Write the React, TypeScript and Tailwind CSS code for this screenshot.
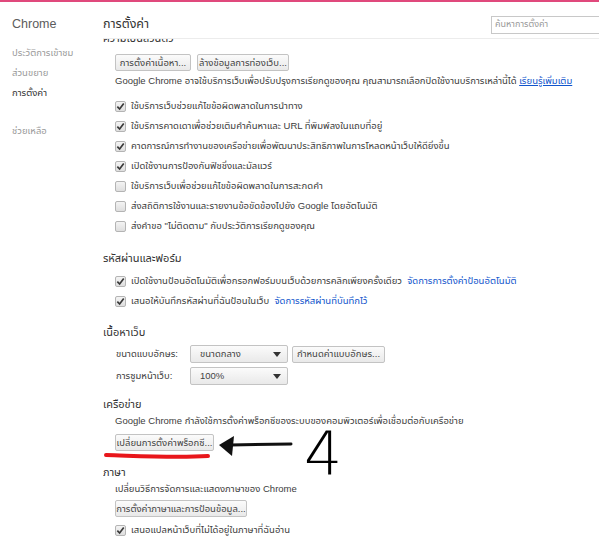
import React from 'react';

const font = "font-['Liberation_Sans','Noto_Sans_Thai_UI',sans-serif]";

const Check: React.FC<{ checked?: boolean }> = ({ checked }) => (
  <span className="flex-shrink-0 w-[11px] h-[11px] rounded-[2px] border border-[#b4b4b4] bg-gradient-to-b from-[#f4f4f4] to-[#dedede] flex items-center justify-center">
    {checked && (
      <svg width="9" height="9" viewBox="0 0 10 10">
        <path d="M1.5 5.2 L4 7.8 L8.6 1.6" fill="none" stroke="#3a3a3a" strokeWidth="1.9" />
      </svg>
    )}
  </span>
);

const Row: React.FC<{ checked?: boolean; children: React.ReactNode }> = ({ checked, children }) => (
  <div className="h-[20px] flex items-center gap-[5px] whitespace-nowrap">
    <Check checked={checked} />
    <span>{children}</span>
  </div>
);

const Btn: React.FC<{ w: string; children: React.ReactNode }> = ({ w, children }) => (
  <button className={`${w} h-[17px] flex-shrink-0 rounded-[2px] border border-[#c3c3c3] bg-gradient-to-b from-[#fbfbfb] to-[#e9e9e9] text-[9.5px] text-[#444] leading-none whitespace-nowrap`}>
    {children}
  </button>
);

const Select: React.FC<{ value: string }> = ({ value }) => (
  <div className="w-[98px] h-[18px] flex-shrink-0 rounded-[2px] border border-[#c3c3c3] bg-gradient-to-b from-[#fbfbfb] to-[#e9e9e9] flex items-center justify-between pl-[9px] pr-[6px] text-[9.5px] text-[#444]">
    <span>{value}</span>
    <svg width="8" height="5" viewBox="0 0 8 5">
      <path d="M0 0 H8 L4 5 Z" fill="#333" />
    </svg>
  </div>
);

const Heading: React.FC<{ className?: string; children: React.ReactNode }> = ({ className = '', children }) => (
  <div className={`h-[20px] flex items-center text-[11px] text-[#333] ${className}`}>{children}</div>
);

export default function App() {
  return (
    <div className={`relative w-[599px] h-[550px] overflow-hidden bg-white border-t-[2px] border-[#e0497c] flex ${font}`}>
      <aside className="w-[103px] flex-shrink-0 pl-[12px]">
        <div className="h-[36px] pt-[9px] flex items-center text-[12.5px] text-[#5c5c5c]">Chrome</div>
        <div className="text-[9.5px] text-[#9a9a9a] flex flex-col">
          <div className="h-[20px] mt-[5px] flex items-center">ประวัติการเข้าชม</div>
          <div className="h-[20px] flex items-center">ส่วนขยาย</div>
          <div className="h-[20px] flex items-center text-[#333]">การตั้งค่า</div>
          <div className="h-[20px] mt-[18px] flex items-center">ช่วยเหลือ</div>
        </div>
      </aside>

      <main className="flex-1 flex flex-col min-w-0">
        <header className="h-[37px] pt-[9px] flex-shrink-0 flex items-center justify-between border-b border-[#ececec] bg-white relative z-10">
          <h1 className="text-[12.5px] text-[#333]">การตั้งค่า</h1>
          <div className="w-[110px] h-[18px] -mr-[2px] border border-[#c8c8c8] flex items-center pl-[3px] text-[9px] text-[#999]">
            ค้นหาการตั้งค่า
          </div>
        </header>

        <div className="flex-1 overflow-hidden text-[9.5px] text-[#3c3c3c]">
          <Heading className="-mt-[11px]">ความเป็นส่วนตัว</Heading>
          <div className="pl-[12px]">
            <div className="mt-[6px] flex gap-[6px]">
              <Btn w="w-[76px]">การตั้งค่าเนื้อหา...</Btn>
              <Btn w="w-[92px]">ล้างข้อมูลการท่องเว็บ...</Btn>
            </div>
            <div className="h-[20px] flex items-center whitespace-nowrap">
              Google Chrome อาจใช้บริการเว็บเพื่อปรับปรุงการเรียกดูของคุณ คุณสามารถเลือกปิดใช้งานบริการเหล่านี้ได้&nbsp;
              <a className="text-[#1155cc] underline">เรียนรู้เพิ่มเติม</a>
            </div>
            <div className="mt-[5px]">
              <Row checked>ใช้บริการเว็บช่วยแก้ไขข้อผิดพลาดในการนำทาง</Row>
              <Row checked>ใช้บริการคาดเดาเพื่อช่วยเติมคำค้นหาและ URL ที่พิมพ์ลงในแถบที่อยู่</Row>
              <Row checked>คาดการณ์การทำงานของเครือข่ายเพื่อพัฒนาประสิทธิภาพในการโหลดหน้าเว็บให้ดียิ่งขึ้น</Row>
              <Row checked>เปิดใช้งานการป้องกันฟิชชิ่งและมัลแวร์</Row>
              <Row>ใช้บริการเว็บเพื่อช่วยแก้ไขข้อผิดพลาดในการสะกดคำ</Row>
              <Row>ส่งสถิติการใช้งานและรายงานข้อขัดข้องไปยัง Google โดยอัตโนมัติ</Row>
              <Row>ส่งคำขอ "ไม่ติดตาม" กับประวัติการเรียกดูของคุณ</Row>
            </div>
          </div>

          <Heading className="mt-[12px]">รหัสผ่านและฟอร์ม</Heading>
          <div className="pl-[12px] mt-[3px]">
            <Row checked>
              เปิดใช้งานป้อนอัตโนมัติเพื่อกรอกฟอร์มบนเว็บด้วยการคลิกเพียงครั้งเดียว&nbsp;&nbsp;
              <a className="text-[#1155cc]">จัดการการตั้งค่าป้อนอัตโนมัติ</a>
            </Row>
            <Row checked>
              เสนอให้บันทึกรหัสผ่านที่ฉันป้อนในเว็บ&nbsp;&nbsp;
              <a className="text-[#1155cc]">จัดการรหัสผ่านที่บันทึกไว้</a>
            </Row>
          </div>

          <Heading className="mt-[11px]">เนื้อหาเว็บ</Heading>
          <div className="pl-[13px] mt-[3px] flex flex-col gap-[4px]">
            <div className="flex items-center">
              <span className="w-[74px] flex-shrink-0">ขนาดแบบอักษร:</span>
              <Select value="ขนาดกลาง" />
              <span className="w-[4px]" />
              <Btn w="w-[93px]">กำหนดค่าแบบอักษร...</Btn>
            </div>
            <div className="flex items-center">
              <span className="w-[74px] flex-shrink-0">การซูมหน้าเว็บ:</span>
              <Select value="100%" />
            </div>
          </div>

          <Heading className="mt-[10px] !h-[18px]">เครือข่าย</Heading>
          <div className="pl-[12px]">
            <div className="h-[16px] flex items-center whitespace-nowrap">
              Google Chrome กำลังใช้การตั้งค่าพร็อกซีของระบบของคอมพิวเตอร์เพื่อเชื่อมต่อกับเครือข่าย
            </div>
            <div className="mt-[5px] flex">
              <Btn w="w-[99px]">เปลี่ยนการตั้งค่าพร็อกซี...</Btn>
            </div>
          </div>

          <Heading className="mt-[12px] !h-[18px]">ภาษา</Heading>
          <div className="pl-[12px]">
            <div className="h-[16px] flex items-center whitespace-nowrap">เปลี่ยนวิธีการจัดการและแสดงภาษาของ Chrome</div>
            <div className="mt-[3px] flex">
              <Btn w="w-[132px]">การตั้งค่าภาษาและการป้อนข้อมูล...</Btn>
            </div>
            <div className="mt-[3px]">
              <Row checked>เสนอแปลหน้าเว็บที่ไม่ได้อยู่ในภาษาที่ฉันอ่าน</Row>
            </div>
          </div>
        </div>
      </main>

      {/* hand-drawn annotation over the page */}
      <svg className="absolute left-0 top-0 pointer-events-none" width="599" height="550" viewBox="0 -2 599 550">
        <path d="M106 451 C140 452 175 454 208 452" fill="none" stroke="#e8161b" strokeWidth="4" strokeLinecap="round" />
        <path d="M219 441 L234 432 L232 452 Z" fill="#111" />
        <path d="M230 441 L291 440" fill="none" stroke="#111" strokeWidth="3" strokeLinecap="round" />
      </svg>
      <span className="absolute left-[304px] top-[432px] h-[40px] text-[60px] leading-[40px] font-['DejaVu_Sans',sans-serif] font-extralight text-black pointer-events-none">
        4
      </span>
    </div>
  );
}
